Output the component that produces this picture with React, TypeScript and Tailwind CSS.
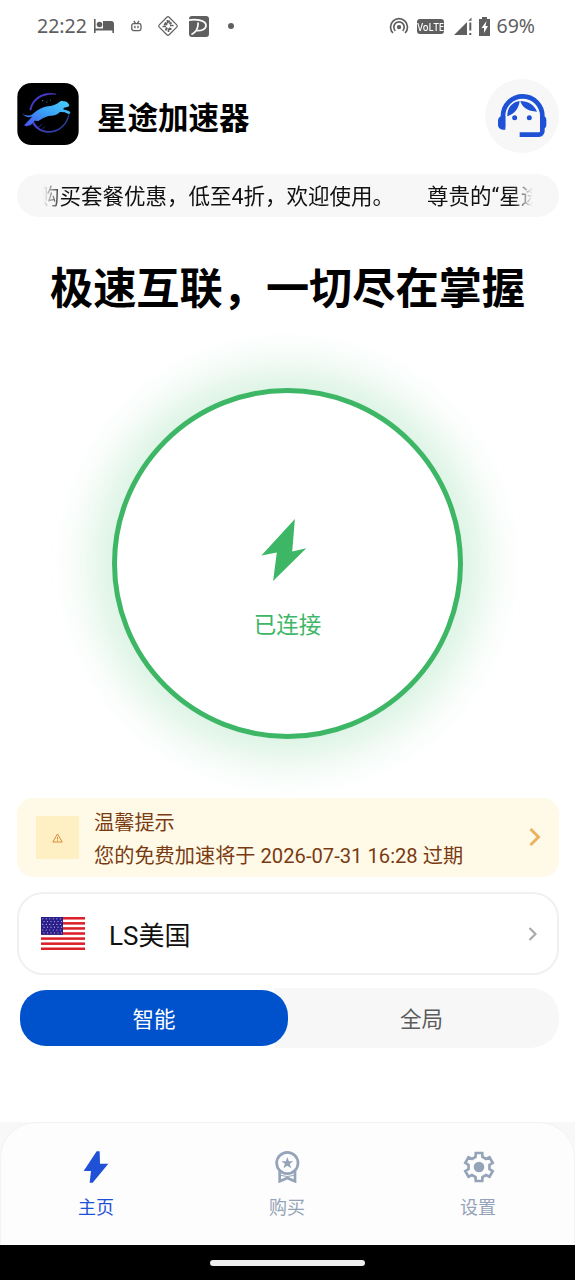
import type { ReactNode } from 'react'

interface TabItem {
  key: string
  label: string
  icon: ReactNode
}

const NOTICES = ['购买套餐优惠，低至4折，欢迎使用。', '尊贵的“星途加速器”用户']

const FONT = "font-[Roboto,'Noto_Sans_CJK_SC',sans-serif]"

function StatusBar() {
  return (
    <div className="flex h-[52px] shrink-0 items-center pl-[37px] pr-[40px] text-[19.5px] text-[#5f5f5f] font-['Noto_Sans',sans-serif]">
      <span className="w-[57px] leading-none">22:22</span>
      <svg className="h-[14px] w-5" viewBox="0 0 20 14" fill="currentColor">
        <path d="M0 0h1.600v9.500H9V2H17a3 3 0 0 1 3 3v9h-1.600v-2.500H1.600V14H0z" />
        <circle cx="5.500" cy="5.500" r="2.800" />
      </svg>
      <svg className="ml-[17px] h-[12px] w-[11px]" viewBox="0 0 11 12" fill="none" stroke="currentColor" strokeWidth="1.300">
        <rect x=".8" y="3.600" width="9.200" height="7" rx="1.800" />
        <path d="M2.800 .8 4.400 3.200M8 .8 6.400 3.200M3.900 5.800v2.400M7 5.800v2.400" />
      </svg>
      <svg className="ml-[15px] h-[22px] w-[22px]" viewBox="0 0 22 22" fill="none" stroke="currentColor">
        <rect x="4" y="4" width="14" height="14" rx="1.600" transform="rotate(45 11 11)" strokeWidth="1.200" />
        <path
          d="M10.500 5v3.500M8 7.500l2 2.500M5.500 11.500H9M7 9l1.500 1M8.500 15.500l1.500-3M11.500 17v-3.500M14.500 14.500 12 13M16.500 10.500H13M14.500 7.500 12.500 9M12.500 5.500l-.5 2"
          strokeWidth="1.700"
        />
      </svg>
      <svg className="ml-[10px] h-[21px] w-[20px]" viewBox="0 0 20 21">
        <rect width="20" height="21" rx="3" fill="currentColor" />
        <path
          d="M-1 4.500C5 2.800 17 3.500 17 9.500c0 4-5 5.500-10 5M9 6.500C9.500 12 7 16 2.500 18.500"
          fill="none"
          stroke="#fff"
          strokeWidth="1.700"
        />
      </svg>
      <span className="ml-[19px] size-[6px] rounded-full bg-[#5f5f5f]" />
      <div className="ml-auto flex items-center">
        <svg className="h-[19px] w-[20px]" viewBox="0 0 20 19" fill="none" stroke="currentColor" strokeWidth="1.700">
          <path d="M3.900 16a8.500 8.500 0 1 1 12.200 0M6.300 13.800a5.200 5.200 0 1 1 7.400 0" />
          <circle cx="10" cy="10.100" r="2.200" fill="currentColor" stroke="none" />
        </svg>
        <span className="ml-[8px] flex h-[15px] w-[27px] items-center justify-center rounded-[3px] bg-[#5f5f5f]">
          <span className="scale-x-[.86] text-[11px] leading-none font-medium text-white">VoLTE</span>
        </span>
        <svg className="ml-[10px] h-[18px] w-[19px]" viewBox="0 0 19 18" fill="currentColor">
          <path d="M0 18 13 5v13zM14.300 3.700l3.200-3.200v3.200zM15.300 5.500h2v8h-2zM15.300 16h2v2h-2z" />
        </svg>
        <svg className="ml-[6px] h-[19px] w-[11px]" viewBox="0 0 11 19">
          <path d="M3 0h5v2h3v17H0V2h3z" fill="currentColor" />
          <path d="M7.500 4 2.500 11H5v5l4-7H6.500z" fill="#fff" />
        </svg>
        <span className="ml-[6px] leading-none">69%</span>
      </div>
    </div>
  )
}

function AppLogo() {
  return (
    <svg className="-mt-[3px] size-[62px]" viewBox="52 42 184 186">
      <defs>
        <linearGradient id="ring" gradientUnits="userSpaceOnUse" x1="90" y1="70" x2="200" y2="190">
          <stop offset="0" stopColor="#4a35c4" />
          <stop offset=".6" stopColor="#4a45dc" />
          <stop offset="1" stopColor="#23479c" />
        </linearGradient>
        <linearGradient id="cat" x1="0" y1="1" x2="1" y2="0">
          <stop offset="0" stopColor="#4a4df0" />
          <stop offset=".5" stopColor="#3a9df5" />
          <stop offset="1" stopColor="#48d2fa" />
        </linearGradient>
      </defs>
      <rect x="52" y="42" width="184" height="186" rx="42" fill="#000" />
      <path
        d="M168 76C140 66 98 80 89 122L93 124C98 92 130 72 168 76zM94 154C102 184 140 200 174 184C196 172 206 152 207 136C198 164 182 184 152 187C126 188 108 176 99 152z"
        fill="url(#ring)"
        stroke="url(#ring)"
        strokeWidth="1.500"
      />
      <path
        d="M66 133C76 141 88 142 98 135C112 122 130 112 152 111C164 110 172 104 181 97L186 95L190 97C198 96 204 100 208 108L205 113L192 116C188 120 190 122 196 122L208 127L212 133L205 135L194 130L180 129C171 138 159 141 145 141L130 147L115 156L103 155L93 168L78 172L72 169L88 152L97 142C86 148 76 145 66 133z"
        fill="url(#cat)"
      />
      <path d="M112 178l15-13M127 180l8-8" stroke="#3440b0" strokeWidth="2" />
      <path d="M126 95h4M139 99h3M150 94h2" stroke="#3f8f8a" strokeWidth="3" />
    </svg>
  )
}

function SupportIcon() {
  return (
    <svg className="-mt-[2px] h-[46px] w-[50px]" viewBox="290 66 150 138" fill="#1f51d6">
      <path
        d="M308 172V138A59 59 0 0 1 426 138V184a10 10 0 0 1-10 10H358"
        fill="none"
        stroke="#1f51d6"
        strokeWidth="14"
      />
      <path d="M315 138h-8a14 14 0 0 0-14 14v13a14 14 0 0 0 14 14h8zM420 138h6a12 12 0 0 1 12 12v14a12 12 0 0 1-12 12h-6z" />
      <path d="M358 93C335 96 320 114 321 139C342 132 355 117 358 93zM360 93C365 111 382 124 410 125C403 105 382 93 360 93z" />
      <circle cx="343" cy="143" r="7.500" />
      <circle cx="387" cy="143" r="7.500" />
    </svg>
  )
}

function UsFlag() {
  const stars = []
  for (let r = 0; r < 6; r++) {
    for (let c = 0; c < 6; c++) {
      stars.push(<circle key={`${r}-${c}`} cx={1.8 + c * 3.5 + (r % 2) * 1.2} cy={1.8 + r * 2.8} r=".6" />)
    }
  }
  return (
    <svg className="h-[33px] w-[44px]" viewBox="0 0 44 33" preserveAspectRatio="none">
      <rect width="44" height="33" fill="#fff" />
      {[0, 2, 4, 6, 8, 10, 12].map((i) => (
        <rect key={i} y={i * 2.54} width="44" height="2.54" fill="#dc2028" />
      ))}
      <rect width="22" height="17.800" fill="#2a1f8a" />
      <g fill="#b9b7e0">{stars}</g>
    </svg>
  )
}

// Outline of a cog with six teeth around (cx, cy)
function gearPoints(cx: number, cy: number, outer: number, inner: number): string {
  const pts: string[] = []
  for (let i = 0; i < 6; i++) {
    const steps: [number, number][] = [[-19, inner], [-13, outer], [13, outer], [19, inner]]
    for (const [deg, r] of steps) {
      const a = ((i * 60 + deg - 90) * Math.PI) / 180
      pts.push(`${(cx + r * Math.cos(a)).toFixed(2)},${(cy + r * Math.sin(a)).toFixed(2)}`)
    }
  }
  return pts.join(' ')
}

const TABS: TabItem[] = [
  {
    key: 'home',
    label: '主页',
    icon: (
      <svg className="size-8" viewBox="3 0 96 96" fill="currentColor">
        <path d="M59 1h-9L11 60h22l-4 35h9l47-57H60z" />
      </svg>
    ),
  },
  {
    key: 'buy',
    label: '购买',
    icon: (
      <svg className="size-8" viewBox="2 0 96 96" fill="none" stroke="currentColor" strokeWidth="8">
        <circle cx="48" cy="36" r="32" />
        <path d="M25 58v33l23-10 23 10V58" strokeWidth="8" />
        <path d="M27 73q21 7 42 0" strokeWidth="3" />
        <path d="M48 18l4.500 12.500H66L55.500 38.500l4 13L48 44l-11.500 7.500 4-13L30 30.500h13.500z" fill="currentColor" stroke="none" />
      </svg>
    ),
  },
  {
    key: 'settings',
    label: '设置',
    icon: (
      <svg className="size-8" viewBox="0 0 96 96" fill="currentColor">
        <polygon points={gearPoints(48, 48, 43, 32)} fill="none" stroke="currentColor" strokeWidth="8" />
        <circle cx="48" cy="48" r="16" />
      </svg>
    ),
  },
]

function Header() {
  return (
    <header className="mt-[27px] flex h-[73px] items-center pl-[17px] pr-[16px]">
      <AppLogo />
      <h1 className="ml-[18px] pt-[7px] text-[30.500px] leading-none font-bold text-black">星途加速器</h1>
      <div className="ml-auto flex size-[74px] items-center justify-center rounded-full bg-[#f7f7f7]">
        <SupportIcon />
      </div>
    </header>
  )
}

function Marquee() {
  return (
    <div className="ml-[17px] mr-[16px] mt-[22px] h-[43px] rounded-full bg-[#f7f7f7] px-[26px]">
      <div className="h-full overflow-hidden mask-[linear-gradient(to_right,transparent,black_20px,black_calc(100%-20px),transparent)]">
        <div className="-ml-[5px] flex h-full items-center gap-[33px] pt-[3px] text-[21.500px] leading-none whitespace-nowrap text-[#111]">
          {NOTICES.map((n) => (
            <span key={n}>{n}</span>
          ))}
        </div>
      </div>
    </div>
  )
}

function ConnectButton() {
  return (
    <button className="mx-auto mt-[74px] flex size-[351px] shrink-0 flex-col items-center rounded-full border-[5px] border-[#3db665] bg-white shadow-[0_0_44px_20px_rgba(61,190,105,0.2)]">
      <svg className="mt-[126px] mr-[8px] h-[62px] w-[46px]" viewBox="95 58 135 185">
        <path d="M195 58 95 167l46-9-11 85 99-98-42 10z" fill="#3db665" />
      </svg>
      <span className="mt-[33px] text-[22.500px] leading-none text-[#3db665]">已连接</span>
    </button>
  )
}

function ExpireTip() {
  return (
    <div className="ml-[17px] mr-[16px] mt-[59px] flex h-[79px] shrink-0 items-center rounded-2xl bg-[#fffae8] pl-[19px] pr-[18px]">
      <div className="flex size-[43px] items-center justify-center bg-[#fef0c3]">
        <svg className="h-[10px] w-[11px]" viewBox="0 0 11 10" fill="none" stroke="#d98a35">
          <path d="M5.500 1 10.200 9H.8zM5.500 4v2.500M5.500 7.200v.8" />
        </svg>
      </div>
      <div className="ml-[15px] pt-[5px] text-[20.200px] leading-[33px] text-[#7a3a12]">
        <p>温馨提示</p>
        <p>您的免费加速将于 2026-07-31 16:28 过期</p>
      </div>
      <svg className="-mt-[1px] ml-auto h-[20px] w-[12px]" viewBox="0 0 12 20" fill="none" stroke="#e9b362" strokeWidth="3">
        <path d="M1.500 2 9.500 10l-8 8" />
      </svg>
    </div>
  )
}

function ServerCard() {
  return (
    <div className="ml-[17px] mr-[16px] mt-[15px] flex h-[83px] shrink-0 items-center rounded-[26px] border-2 border-[#f0f0f0] bg-white pl-[22px] pr-[20px]">
      <UsFlag />
      <span className="ml-[24px] pt-[5px] text-[26px] leading-none text-[#111]">LS美国</span>
      <svg className="ml-auto h-[14px] w-[9px]" viewBox="0 0 9 14" fill="none" stroke="#a9a9a9" strokeWidth="2.200">
        <path d="M1.500 1 7.500 7l-6 6" />
      </svg>
    </div>
  )
}

function ModeSwitch() {
  return (
    <div className="ml-[17px] mr-[16px] mt-[13px] flex h-[60px] shrink-0 items-center rounded-[28px] bg-linear-to-r from-white from-[257px] to-[#f7f7f7] to-[257px] pl-[3px] text-[21.500px] leading-none">
      <div className="flex h-[56px] w-[268px] items-center justify-center rounded-[26px] bg-[#0052cc] pt-[4px] text-white">
        智能
      </div>
      <div className="flex flex-1 items-center justify-center pr-[4px] pt-[4px] text-[#5c5c5c]">全局</div>
    </div>
  )
}

function TabBar({ active }: { active: string }) {
  return (
    <nav className="mt-auto h-[123px] shrink-0 bg-[#f8f8f8]">
      <div className="grid h-full grid-cols-3 rounded-t-[36px] border-x border-t border-[#f3f3f5] bg-[#fdfdfd] pt-[28px]">
        {TABS.map((tab) => (
          <div
            key={tab.key}
            className={`flex flex-col items-center ${tab.key === active ? 'text-[#1f51d6]' : 'text-[#94a3b8]'}`}
          >
            {tab.icon}
            <span className="mt-[16px] mr-[1px] text-[18px] leading-none">{tab.label}</span>
          </div>
        ))}
      </div>
    </nav>
  )
}

export default function App() {
  return (
    <div className={`flex h-[1280px] w-[575px] flex-col overflow-hidden bg-white ${FONT}`}>
      <StatusBar />
      <Header />
      <Marquee />
      <h2 className="mt-[49px] text-center text-[43.200px] leading-[48px] font-bold whitespace-nowrap text-black">
        极速互联，一切尽在掌握
      </h2>
      <ConnectButton />
      <ExpireTip />
      <ServerCard />
      <ModeSwitch />
      <TabBar active="home" />
      <div className="flex h-[35px] shrink-0 items-center justify-center bg-black">
        <div className="h-[6px] w-[155px] rounded-full bg-[#efefef]" />
      </div>
    </div>
  )
}
